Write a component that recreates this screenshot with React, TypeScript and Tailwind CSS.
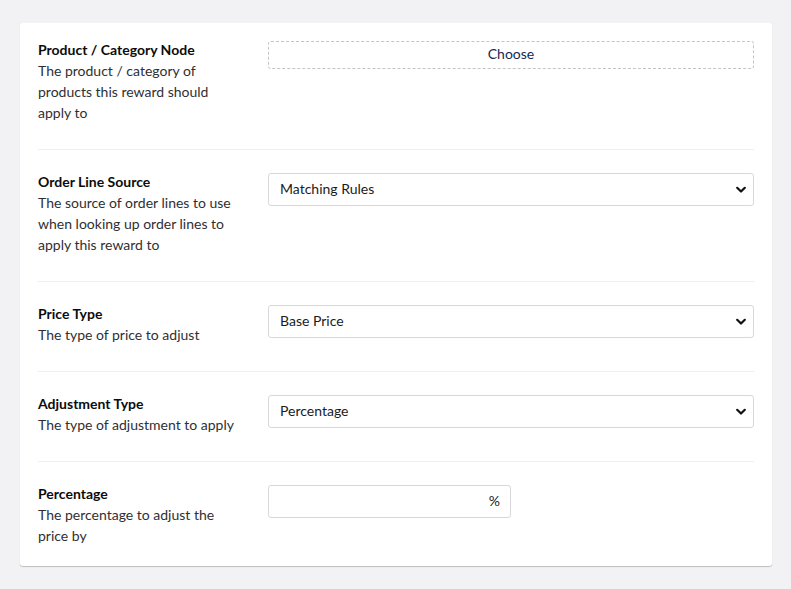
import React from "react";

function Chevron() {
  return (
    <svg
      className="pointer-events-none absolute right-[8px] top-1/2 -translate-y-1/2"
      width="10"
      height="7"
      viewBox="0 0 10 7"
    >
      <path d="M1.2 1.2 L5 5 L8.8 1.2" fill="none" stroke="#111" strokeWidth="2.2" strokeLinecap="round" strokeLinejoin="round" />
    </svg>
  );
}

function SelectBox({ value }: { value: string }) {
  return (
    <div className="relative w-full">
      <select
        defaultValue={value}
        className="h-[33px] w-full appearance-none rounded-[3px] border border-[#d8d7d9] bg-white pb-[2px] pl-[11px] pr-8 text-[14px] text-[#1b1b1b] outline-none"
      >
        <option>{value}</option>
      </select>
      <Chevron />
    </div>
  );
}

function Row({
  title,
  desc,
  children,
  last,
}: {
  title: string;
  desc: string;
  children: React.ReactNode;
  last?: boolean;
}) {
  return (
    <div className={last ? "" : "border-b border-[#efeff0] pb-[24px] mb-[23px]"}>
      <div className="flex">
        <div className="-mt-[2px] mb-[2px] w-[230px] shrink-0 pr-[34px] leading-[21px]">
          <div className="text-[14px] font-bold text-[#0c0c0c]">{title}</div>
          <div className="text-[14px] text-[#2f2f33]">{desc}</div>
        </div>
        <div className="flex-1">{children}</div>
      </div>
    </div>
  );
}

export default function App() {
  return (
    <div
      className="min-h-[589px] w-full bg-[#f2f2f4] pl-5 pr-[19px] pt-[23px] pb-6"
      style={{ fontFamily: "Lato, 'Noto Sans', sans-serif" }}
    >
      <div className="rounded-[3px] bg-white px-[18px] pt-[18px] pb-[18px] shadow-[0_1px_1px_rgba(0,0,0,0.22)]">
        <Row title="Product / Category Node" desc="The product / category of products this reward should apply to">
          <button className="h-[28px] w-full rounded-[3px] border border-dashed border-[#c4c4c6] bg-white pb-[3px] text-center text-[14px] text-[#1b264f]">
            Choose
          </button>
        </Row>
        <Row title="Order Line Source" desc="The source of order lines to use when looking up order lines to apply this reward to">
          <SelectBox value="Matching Rules" />
        </Row>
        <Row title="Price Type" desc="The type of price to adjust">
          <SelectBox value="Base Price" />
        </Row>
        <Row title="Adjustment Type" desc="The type of adjustment to apply">
          <SelectBox value="Percentage" />
        </Row>
        <Row title="Percentage" desc="The percentage to adjust the price by" last>
          <div className="flex h-[33px] w-[243px] items-center rounded-[3px] border border-[#d8d7d9] bg-white pb-[2px] pl-[11px] pr-[10px]">
            <input className="min-w-0 flex-1 bg-transparent text-[14px] outline-none" />
            <span className="text-[14px] text-[#1b1b1b]">%</span>
          </div>
        </Row>
      </div>
    </div>
  );
}
